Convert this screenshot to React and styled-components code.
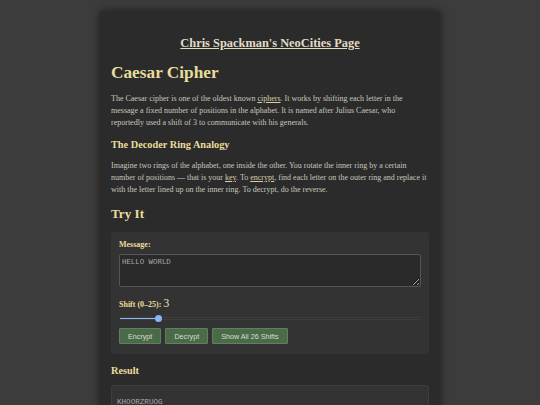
import React, { useState } from "react";
import styled, { createGlobalStyle } from "styled-components";

const Global = createGlobalStyle`
  html, body {
    margin: 0;
    padding: 0;
    background: #3c3c3c;
  }
  body {
    font-family: "Liberation Serif", "DejaVu Serif", serif;
  }
`;

const Page = styled.div`
  padding-top: 11px;
`;

const Sheet = styled.main`
  width: 318px;
  margin: 0 auto;
  padding: 24px 11px 20px;
  background: #2b2b2b;
  border-radius: 4px;
  box-shadow: 0 0 8px rgba(0, 0, 0, 0.55);
  color: #c9c6bc;
`;

const SiteHeader = styled.header`
  text-align: center;
  line-height: 14px;
`;

const SiteLink = styled.a`
  font-size: 12.4px;
  font-weight: bold;
  color: #e2dac4;
  text-decoration: underline;
`;

const Title = styled.h1`
  margin: 13px 0 0;
  font-size: 17.3px;
  line-height: 20px;
  font-weight: bold;
  color: #e8dd9c;
`;

const Para = styled.p`
  margin: ${(p) => p.$top || 10}px 0 0;
  font-size: 8px;
  line-height: 12px;
`;

const InlineLink = styled.a`
  color: #d9cfa6;
  text-decoration: underline;
`;

const SubHead = styled.h3`
  margin: ${(p) => p.$top || 9}px 0 0;
  font-size: 10.3px;
  line-height: 13px;
  font-weight: bold;
  color: #e8dd9c;
`;

const Section = styled.h2`
  margin: 10px 0 0;
  font-size: 13.2px;
  line-height: 16px;
  font-weight: bold;
  color: #e8dd9c;
`;

const Panel = styled.div`
  margin-top: 10px;
  padding: 8px 8px 10px;
  background: #333333;
  border-radius: 3px;
`;

const Label = styled.label`
  display: block;
  font-size: 8px;
  line-height: 10px;
  font-weight: bold;
  color: #e8dd9c;
  margin-top: ${(p) => p.$top || 0}px;
`;

const ShiftValue = styled.span`
  font-size: 11.5px;
  font-weight: normal;
  color: #ece3c4;
`;

const MessageBox = styled.textarea`
  display: block;
  box-sizing: border-box;
  width: 100%;
  height: 33px;
  margin-top: 4px;
  padding: 3px 2px;
  resize: vertical;
  background: #2a2a2a;
  border: 1px solid #555555;
  border-radius: 2px;
  color: #a9a9a9;
  font-family: "Liberation Mono", "DejaVu Sans Mono", monospace;
  font-size: 7.4px;
  line-height: 9px;
  outline: none;
`;

const Slider = styled.input`
  -webkit-appearance: none;
  appearance: none;
  display: block;
  width: 100%;
  height: 3px;
  margin: 7px 0 0;
  border-radius: 2px;
  outline: none;
  border: 1px solid #3f3f3f;
  box-sizing: border-box;

  &::-webkit-slider-thumb {
    -webkit-appearance: none;
    width: 7px;
    height: 7px;
    border-radius: 50%;
    background: #8ab4f8;
    border: none;
  }
`;

const ButtonRow = styled.div`
  display: flex;
  gap: 4px;
  margin-top: 8px;
`;

const Button = styled.button`
  height: 16px;
  padding: 0 8px;
  background: #4a6a48;
  border: 1px solid #5f825c;
  border-radius: 1px;
  color: #d6dfd4;
  font-family: "Liberation Sans", Arial, sans-serif;
  font-size: 7.2px;
  cursor: pointer;
`;

const ResultBox = styled.div`
  margin-top: 8px;
  padding: 12px 5px 12px;
  background: #333333;
  border: 1px solid #3e3e3e;
  border-radius: 3px;
  color: #a9a9a9;
  font-family: "Liberation Mono", "DejaVu Sans Mono", monospace;
  font-size: 7.6px;
  line-height: 8px;
`;

function shiftText(text, n) {
  return text.replace(/[A-Z]/g, (c) =>
    String.fromCharCode(((c.charCodeAt(0) - 65 + n + 26) % 26) + 65)
  );
}

export default function App() {
  const [message, setMessage] = useState("HELLO WORLD");
  const [shift, setShift] = useState(3);
  const [result, setResult] = useState("KHOORZRUOG");
  const pct = (shift / 25) * 100;

  return (
    <>
      <Global />
      <Page>
        <Sheet>
          <SiteHeader>
            <SiteLink href="#">Chris Spackman's NeoCities Page</SiteLink>
          </SiteHeader>
          <Title>Caesar Cipher</Title>
          <Para>
            The Caesar cipher is one of the oldest known{" "}
            <InlineLink href="#">ciphers</InlineLink>. It works by shifting each
            letter in the message a fixed number of positions in the alphabet.
            It is named after Julius Caesar, who reportedly used a shift of 3 to
            communicate with his generals.
          </Para>
          <SubHead>The Decoder Ring Analogy</SubHead>
          <Para $top={9}>
            Imagine two rings of the alphabet, one inside the other. You rotate
            the inner ring by a certain number of positions — that is your{" "}
            <InlineLink href="#">key</InlineLink>. To{" "}
            <InlineLink href="#">encrypt</InlineLink>, find each letter on the
            outer ring and replace it with the letter lined up on the inner
            ring. To decrypt, do the reverse.
          </Para>
          <Section>Try It</Section>
          <Panel>
            <Label>Message:</Label>
            <MessageBox
              value={message}
              onChange={(e) => setMessage(e.target.value)}
            />
            <Label $top={11}>
              Shift (0–25): <ShiftValue>{shift}</ShiftValue>
            </Label>
            <Slider
              type="range"
              min="0"
              max="25"
              value={shift}
              onChange={(e) => setShift(Number(e.target.value))}
              style={{
                background: `linear-gradient(to right, #8ab4f8 ${pct}%, #2e2e2e ${pct}%)`,
              }}
            />
            <ButtonRow>
              <Button onClick={() => setResult(shiftText(message.replace(/ /g, ""), shift))}>
                Encrypt
              </Button>
              <Button onClick={() => setResult(shiftText(message.replace(/ /g, ""), -shift))}>
                Decrypt
              </Button>
              <Button>Show All 26 Shifts</Button>
            </ButtonRow>
          </Panel>
          <SubHead $top={10}>Result</SubHead>
          <ResultBox>{result}</ResultBox>
        </Sheet>
      </Page>
    </>
  );
}
